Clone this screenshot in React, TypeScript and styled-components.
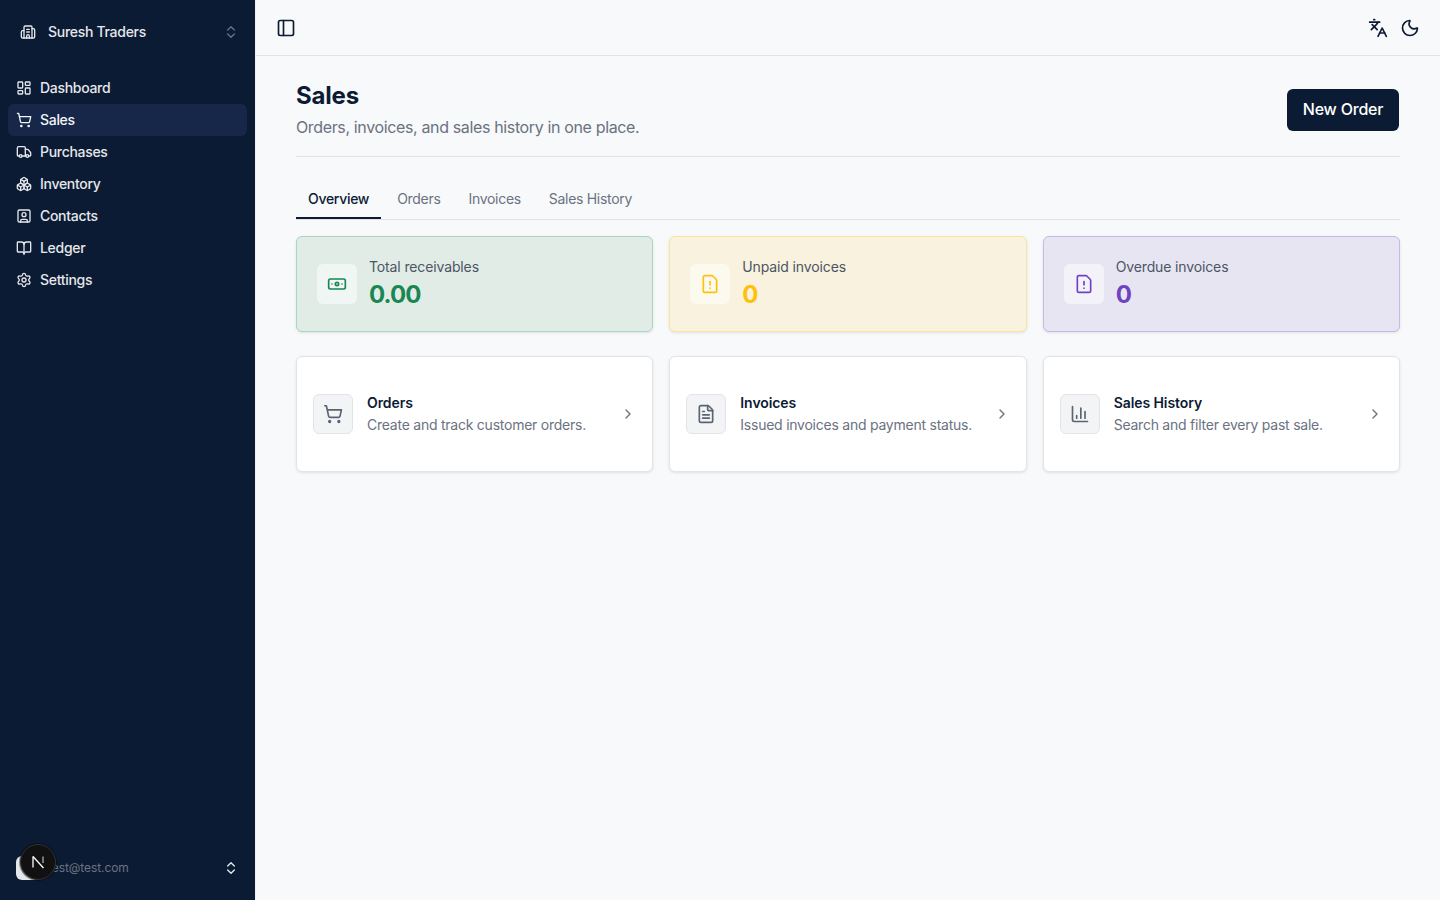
import React from "react";
import styled, { createGlobalStyle } from "styled-components";
import {
  Banknote,
  BookOpen,
  Boxes,
  Building2,
  ChartColumn,
  ChevronRight,
  ChevronsUpDown,
  FileText,
  FileWarning,
  Languages,
  LayoutDashboard,
  Moon,
  PanelLeft,
  Settings,
  ShoppingCart,
  SquareUser,
  Truck,
} from "lucide-react";

const navItems = [
  { label: "Dashboard", icon: LayoutDashboard },
  { label: "Sales", icon: ShoppingCart, active: true },
  { label: "Purchases", icon: Truck },
  { label: "Inventory", icon: Boxes },
  { label: "Contacts", icon: SquareUser },
  { label: "Ledger", icon: BookOpen },
  { label: "Settings", icon: Settings },
];

const tabs = ["Overview", "Orders", "Invoices", "Sales History"];

const stats = [
  { label: "Total receivables", value: "0.00", icon: Banknote, bg: "#e1ece7", border: "#a9d6c1", color: "#198754" },
  { label: "Unpaid invoices", value: "0", icon: FileWarning, bg: "#f9f2df", border: "#fbe59c", color: "#ffc107" },
  { label: "Overdue invoices", value: "0", icon: FileWarning, bg: "#e8e5f3", border: "#c8b8ea", color: "#6f42c1" },
];

const links = [
  { title: "Orders", text: "Create and track customer orders.", icon: ShoppingCart },
  { title: "Invoices", text: "Issued invoices and payment status.", icon: FileText },
  { title: "Sales History", text: "Search and filter every past sale.", icon: ChartColumn },
];

export default function App() {
  return (
    <Shell>
      <GlobalStyle />
      <Sidebar>
        <OrgRow>
          <Building2 size={16} />
          <OrgName>Suresh Traders</OrgName>
          <OrgChevron>
            <ChevronsUpDown size={16} />
          </OrgChevron>
        </OrgRow>
        <Nav>
          {navItems.map((item) => (
            <NavItem key={item.label} $active={item.active}>
              <item.icon size={16} />
              <NavLabel>{item.label}</NavLabel>
            </NavItem>
          ))}
        </Nav>
        <UserRow>
          <Avatar />
          <UserEmail>test@test.com</UserEmail>
          <UserChevron>
            <ChevronsUpDown size={16} />
          </UserChevron>
          <DevBadge>
            <svg width="16" height="16" viewBox="0 0 16 16" fill="none">
              <path d="M3 2.5V13.5" stroke="#fff" strokeWidth="1.3" />
              <path d="M3 2.5L13.5 14" stroke="#fff" strokeWidth="1.3" />
              <path d="M13 2.5V9" stroke="#bbb" strokeWidth="1.2" />
            </svg>
          </DevBadge>
        </UserRow>
      </Sidebar>
      <Main>
        <TopBar>
          <IconButton>
            <PanelLeft size={20} />
          </IconButton>
          <TopActions>
            <IconButton>
              <Languages size={20} />
            </IconButton>
            <IconButton>
              <Moon size={20} />
            </IconButton>
          </TopActions>
        </TopBar>
        <Content>
          <PageHeader>
            <div>
              <Title>Sales</Title>
              <Subtitle>Orders, invoices, and sales history in one place.</Subtitle>
            </div>
            <PrimaryButton>New Order</PrimaryButton>
          </PageHeader>
          <TabList>
            {tabs.map((tab, i) => (
              <Tab key={tab} $active={i === 0}>
                {tab}
              </Tab>
            ))}
          </TabList>
          <CardGrid>
            {stats.map((stat) => (
              <StatCard key={stat.label} $bg={stat.bg} $border={stat.border}>
                <StatIcon $color={stat.color}>
                  <stat.icon size={20} />
                </StatIcon>
                <div>
                  <StatLabel>{stat.label}</StatLabel>
                  <StatValue $color={stat.color}>{stat.value}</StatValue>
                </div>
              </StatCard>
            ))}
          </CardGrid>
          <LinkGrid>
            {links.map((link) => (
              <LinkCard key={link.title}>
                <LinkIcon>
                  <link.icon size={20} />
                </LinkIcon>
                <LinkBody>
                  <LinkTitle>{link.title}</LinkTitle>
                  <LinkText>{link.text}</LinkText>
                </LinkBody>
                <LinkChevron>
                  <ChevronRight size={16} />
                </LinkChevron>
              </LinkCard>
            ))}
          </LinkGrid>
        </Content>
      </Main>
    </Shell>
  );
}

const GlobalStyle = createGlobalStyle`
  * {
    box-sizing: border-box;
  }

  body {
    margin: 0;
    font-family: Inter, "Liberation Sans", sans-serif;
    background: #f8f9fb;
    color: #0b1a33;
  }
`;

const Shell = styled.div`
  display: flex;
  height: 900px;
  overflow: hidden;
`;

const Sidebar = styled.aside`
  width: 256px;
  flex-shrink: 0;
  display: flex;
  flex-direction: column;
  background: #0c1b34;
  background-clip: padding-box;
  border-right: 1px solid #f1f2f5;
  color: #e5e7eb;
  padding: 8px;
`;

const OrgRow = styled.div`
  display: flex;
  align-items: center;
  height: 48px;
  padding: 0 8px 0 12px;
  gap: 12px;
  color: #e5e7eb;
`;

const OrgName = styled.span`
  flex: 1;
  margin-bottom: 1px;
  font-size: 14px;
  font-weight: 500;
  letter-spacing: -0.29px;
`;

const OrgChevron = styled.span`
  display: flex;
  color: #6b7280;
`;

const Nav = styled.nav`
  display: flex;
  flex-direction: column;
  margin-top: 16px;
`;

const NavItem = styled.a<{ $active?: boolean }>`
  display: flex;
  align-items: center;
  gap: 8px;
  height: 32px;
  padding: 0 8px;
  border-radius: 6px;
  font-size: 14px;
  font-weight: 500;
  color: ${(p) => (p.$active ? "#f3f4f6" : "#e5e7eb")};
  background: ${(p) => (p.$active ? "#16274a" : "transparent")};
`;

const NavLabel = styled.span`
  margin-bottom: 2px;
  letter-spacing: -0.3px;
`;

const UserRow = styled.div`
  position: relative;
  display: flex;
  align-items: center;
  margin-top: auto;
  height: 48px;
  padding: 0 8px;
  gap: 8px;
`;

const Avatar = styled.div`
  width: 24px;
  height: 24px;
  border-radius: 6px;
  background: #e5e7eb;
  flex-shrink: 0;
`;

const UserEmail = styled.span`
  flex: 1;
  margin-bottom: 2px;
  font-size: 12px;
  letter-spacing: -0.08px;
  color: #6b7280;
`;

const UserChevron = styled.span`
  display: flex;
  color: #e5e7eb;
`;

const DevBadge = styled.div`
  position: absolute;
  left: 11.5px;
  top: 0;
  width: 36px;
  height: 36px;
  border-radius: 50%;
  background: #111;
  border: 1px solid #333;
  box-shadow: 0 0 0 1px rgba(0, 0, 0, 0.4);
  display: flex;
  align-items: center;
  justify-content: center;
`;

const Main = styled.main`
  flex: 1;
  min-width: 0;
`;

const TopBar = styled.header`
  display: flex;
  align-items: center;
  justify-content: space-between;
  height: 56px;
  padding: 0 20px;
  border-bottom: 1px solid #e2e4e9;
`;

const TopActions = styled.div`
  display: flex;
  gap: 12px;
`;

const IconButton = styled.span`
  display: flex;
  color: #0c1b34;
`;

const Content = styled.div`
  padding: 24px 40px;
`;

const PageHeader = styled.div`
  display: flex;
  align-items: center;
  justify-content: space-between;
  padding-bottom: 16px;
  border-bottom: 1px solid #e2e4e9;
`;

const Title = styled.h1`
  margin: 0;
  font-size: 24px;
  line-height: 32px;
  font-weight: 700;
  letter-spacing: -0.2px;
  color: #0c1b34;
`;

const Subtitle = styled.p`
  margin: 4px 0 2px;
  font-size: 16px;
  line-height: 22px;
  letter-spacing: -0.36px;
  color: #6b7280;
`;

const PrimaryButton = styled.button`
  width: 112px;
  height: 42px;
  padding: 0 0 2px;
  border: none;
  border-radius: 6px;
  margin-right: 1px;
  background: #0c1b34;
  color: #fff;
  font-family: inherit;
  font-size: 16px;
  font-weight: 500;
  letter-spacing: -0.22px;
`;

const TabList = styled.div`
  display: flex;
  margin-top: 24px;
  height: 39px;
  border-bottom: 1px solid #e2e4e9;
`;

const Tab = styled.div<{ $active?: boolean }>`
  padding: 0 12px;
  margin-right: 4px;
  height: 38px;
  line-height: 36px;
  font-size: 14px;
  letter-spacing: -0.3px;
  font-weight: ${(p) => (p.$active ? 500 : 400)};
  color: ${(p) => (p.$active ? "#0c1b34" : "#6b7280")};
  border-bottom: 2px solid ${(p) => (p.$active ? "#0c1b34" : "transparent")};
`;

const CardGrid = styled.div`
  display: grid;
  grid-template-columns: repeat(3, 1fr);
  gap: 16px;
  margin-top: 16px;
`;

const StatCard = styled.div<{ $bg: string; $border: string }>`
  display: flex;
  align-items: center;
  gap: 12px;
  height: 96px;
  padding: 0 20px;
  border-radius: 6px;
  background: ${(p) => p.$bg};
  border: 1px solid ${(p) => p.$border};
  box-shadow: 0 1px 3px rgba(0, 0, 0, 0.1);
`;

const StatIcon = styled.div<{ $color: string }>`
  width: 40px;
  height: 40px;
  border-radius: 6px;
  background: rgba(255, 255, 255, 0.5);
  color: ${(p) => p.$color};
  display: flex;
  align-items: center;
  justify-content: center;
`;

const StatLabel = styled.div`
  font-size: 14px;
  line-height: 20px;
  letter-spacing: -0.13px;
  color: #4b5563;
`;

const StatValue = styled.div<{ $color: string }>`
  margin-top: 2px;
  font-size: 24px;
  line-height: 32px;
  font-weight: 700;
  letter-spacing: -0.9px;
  color: ${(p) => p.$color};
`;

const LinkGrid = styled(CardGrid)`
  margin-top: 24px;
`;

const LinkCard = styled.div`
  display: flex;
  align-items: center;
  gap: 14px;
  height: 116px;
  padding: 0 16px;
  border-radius: 6px;
  background: #fff;
  border: 1px solid #e2e4e9;
  box-shadow: 0 1px 3px rgba(0, 0, 0, 0.1);
`;

const LinkIcon = styled.div`
  width: 40px;
  height: 40px;
  flex-shrink: 0;
  border-radius: 6px;
  background: #f3f4f6;
  border: 1px solid #e2e4e9;
  color: #5b6472;
  display: flex;
  align-items: center;
  justify-content: center;
`;

const LinkBody = styled.div`
  flex: 1;
  min-width: 0;
`;

const LinkTitle = styled.div`
  font-size: 14px;
  line-height: 20px;
  font-weight: 600;
  letter-spacing: -0.08px;
  color: #0c1b34;
`;

const LinkText = styled.div`
  margin-top: 2px;
  font-size: 14px;
  line-height: 20px;
  letter-spacing: -0.24px;
  color: #6b7280;
`;

const LinkChevron = styled.span`
  display: flex;
  color: #6b7280;
`;
